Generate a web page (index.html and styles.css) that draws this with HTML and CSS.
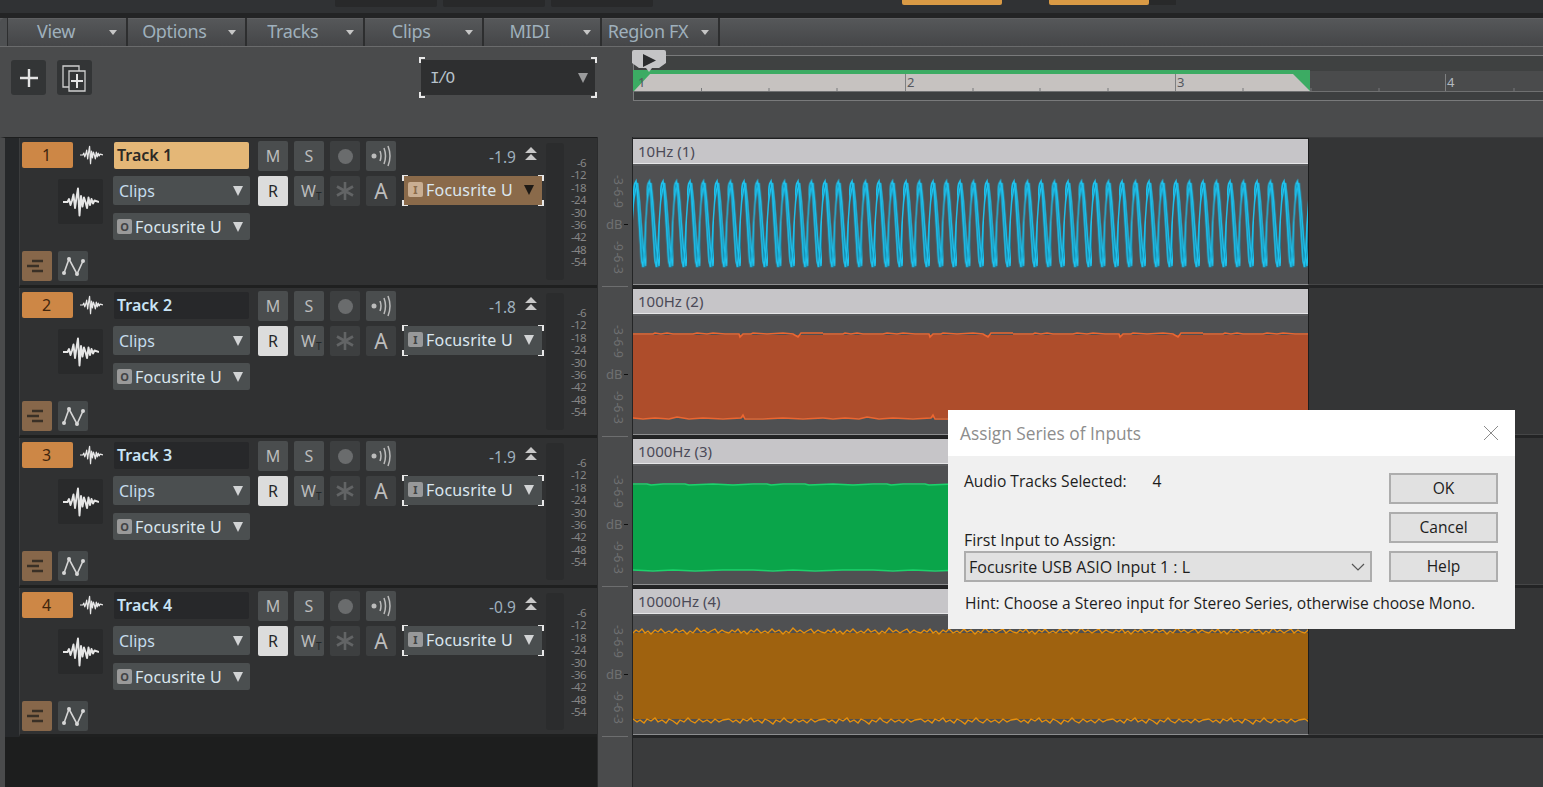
FILE: index.html
```html
<!DOCTYPE html>
<html lang="en">
<head>
<meta charset="utf-8">
<title>Assign Series of Inputs</title>
<link rel="stylesheet" href="styles.css">
</head>
<body>
<svg class="defs" aria-hidden="true">
  <symbol id="i-wave" viewBox="0 0 24 20"><path d="M0 10H3L4 8 5 12 6 9 7 5 8 14 9 7 10 1 11 19 12 6 13 13 14 7 15 10 16 14 17 7 18 12 19 8 20 11 21 9 24 10" fill="none" stroke="currentColor" stroke-width="1.3" stroke-linejoin="round"/></symbol>
  <symbol id="i-lanes" viewBox="0 0 30 30"><path d="M10 10H21M5 15H17M10 20H21" fill="none" stroke="currentColor" stroke-width="2.5"/></symbol>
  <symbol id="i-auto" viewBox="0 0 30 30"><path d="M6 22 11 8 19 23 25 10" fill="none" stroke="currentColor" stroke-width="1.6"/><g fill="currentColor"><circle cx="6" cy="22" r="2"/><circle cx="11" cy="8" r="2"/><circle cx="19" cy="23" r="2"/><circle cx="25" cy="10" r="2"/></g></symbol>
  <symbol id="i-echo" viewBox="0 0 30 30"><circle cx="8" cy="15" r="2.5" fill="currentColor"/><path d="M14 10Q16 15 14 20M18 7Q21 15 18 23M22 5Q26 15 22 25" fill="none" stroke="currentColor" stroke-width="1.5"/></symbol>
  <symbol id="i-star" viewBox="0 0 30 30"><path d="M15 6V24M7 10.500 23 19.500M23 10.500 7 19.500" fill="none" stroke="currentColor" stroke-width="2.6"/></symbol>
  <symbol id="i-updown" viewBox="0 0 14 14"><path d="M7 0 13 6H1ZM7 7 13 13H1Z" fill="currentColor"/></symbol>
</svg>

<header class="topbar">
  <span class="ttab ttab-first"></span><span class="ttab"></span><span class="ttab"></span>
  <span class="otab otab-first"></span><span class="otab otab-second"></span><span class="dtab"></span>
</header>

<nav class="menubar">
  <div class="menuitem"><span class="mlabel">View</span><i class="caret"></i></div>
  <div class="menuitem"><span class="mlabel">Options</span><i class="caret"></i></div>
  <div class="menuitem"><span class="mlabel">Tracks</span><i class="caret"></i></div>
  <div class="menuitem"><span class="mlabel">Clips</span><i class="caret"></i></div>
  <div class="menuitem"><span class="mlabel">MIDI</span><i class="caret"></i></div>
  <div class="menuitem"><span class="mlabel">Region FX</span><i class="caret"></i></div>
</nav>

<section class="toolbar">
  <div class="toolpane">
    <button class="tbtn"><svg width="22" height="22" viewBox="0 0 22 22"><path d="M11 2V20M2 11H20" stroke="#e4e4e4" stroke-width="2.4"/></svg></button>
    <button class="tbtn tbtn-dup"><svg width="30" height="32" viewBox="0 0 30 32"><path d="M9 25H3V4H19V9" fill="none" stroke="#cfcfcf" stroke-width="1.3"/><path d="M9 9H25V29H9Z" fill="none" stroke="#cfcfcf" stroke-width="1.3"/><path d="M17 12V26M11 19H23" stroke="#e4e4e4" stroke-width="2"/></svg></button>
    <div class="iosel brk"><span class="iotext">I/O</span><i class="tri tri-io"></i></div>
  </div>
  <div class="rulerpane">
    <svg class="ruler" width="911" height="52" viewBox="0 0 911 52">
      <rect x="1" y="5" width="910" height="16" fill="#3f4141"/>
      <rect x="1" y="42" width="910" height="8" fill="#3d3f40"/>
      <path d="M0 5.500H911M1 50.500H911M1.500 5V50" stroke="#797a7b" fill="none"/>
      <path d="M1 41 V20H678V41Z" fill="#3cab63"/>
      <path d="M2 41 18 24H661L678 41Z" fill="#c6c2c0"/>
      <path d="M1 41.500H911" stroke="#6f7071"/>
      <path d="M69.500 38V41M137 38V41M205 38V41M341 38V41M408 38V41M476 38V41M611 38V41M679 38V41M747 38V41M882 38V41" stroke="#77787a"/>
      <path d="M273.500 24V41M543.500 24V41M813.500 24V41" stroke="#7f8081"/>
      <text class="bar" x="6" y="37">1</text>
      <text class="bar" x="275" y="37">2</text>
      <text class="bar" x="545" y="37">3</text>
      <text class="bar bar-dim" x="815" y="37">4</text>
    </svg>
    <div class="playhead"><svg width="34" height="24" viewBox="0 0 34 24"><path d="M2 0H32Q34 0 34 2V13L27 18H20L17 22 14 18H7L0 13V2Q0 0 2 0Z" fill="#c4c4c6"/><path d="M11 4 24 10.500 11 17Z" fill="#2a2b2d"/></svg></div>
  </div>
</section>

<main class="workspace">
  <div class="tracklist">

    <article class="track">
      <div class="t-left">
        <div class="t-row1"><span class="num">1</span><svg class="ic-wave"><use href="#i-wave"/></svg><span class="name name-on">Track 1</span></div>
        <div class="t-mid">
          <div class="tile"><svg width="36" height="30"><use href="#i-wave"/></svg></div>
          <div class="t-sels">
            <div class="sel sel-clips"><span>Clips</span><i class="tri"></i></div>
            <div class="sel sel-out"><b class="badge">O</b><span class="clip-text">Focusrite U:</span><i class="tri"></i></div>
          </div>
        </div>
        <div class="t-bot"><span class="sq sq-brown"><svg width="30" height="30"><use href="#i-lanes"/></svg></span><span class="sq"><svg width="30" height="30"><use href="#i-auto"/></svg></span></div>
      </div>
      <div class="t-btns">
        <span class="btn">M</span><span class="btn">S</span><span class="btn btn-off"><i class="dot"></i></span><span class="btn"><svg width="30" height="30"><use href="#i-echo"/></svg></span>
        <span class="btn btn-r">R</span><span class="btn btn-w">W<small>T</small></span><span class="btn btn-off"><svg width="30" height="30"><use href="#i-star"/></svg></span><span class="btn btn-a">A</span>
      </div>
      <div class="t-right">
        <div class="gain"><span>-1.9</span><svg width="14" height="14"><use href="#i-updown"/></svg></div>
        <div class="insel insel-on brk"><b class="badge">I</b><span class="clip-text">Focusrite U:</span><i class="tri tri-dark"></i></div>
      </div>
      <div class="meter"></div>
      <div class="scale"><span>-6</span><span>-12</span><span>-18</span><span>-24</span><span>-30</span><span>-36</span><span>-42</span><span>-48</span><span>-54</span></div>
    </article>

    <article class="track">
      <div class="t-left">
        <div class="t-row1"><span class="num">2</span><svg class="ic-wave"><use href="#i-wave"/></svg><span class="name">Track 2</span></div>
        <div class="t-mid">
          <div class="tile"><svg width="36" height="30"><use href="#i-wave"/></svg></div>
          <div class="t-sels">
            <div class="sel sel-clips"><span>Clips</span><i class="tri"></i></div>
            <div class="sel sel-out"><b class="badge">O</b><span class="clip-text">Focusrite U:</span><i class="tri"></i></div>
          </div>
        </div>
        <div class="t-bot"><span class="sq sq-brown"><svg width="30" height="30"><use href="#i-lanes"/></svg></span><span class="sq"><svg width="30" height="30"><use href="#i-auto"/></svg></span></div>
      </div>
      <div class="t-btns">
        <span class="btn">M</span><span class="btn">S</span><span class="btn btn-off"><i class="dot"></i></span><span class="btn"><svg width="30" height="30"><use href="#i-echo"/></svg></span>
        <span class="btn btn-r">R</span><span class="btn btn-w">W<small>T</small></span><span class="btn btn-off"><svg width="30" height="30"><use href="#i-star"/></svg></span><span class="btn btn-a">A</span>
      </div>
      <div class="t-right">
        <div class="gain"><span>-1.8</span><svg width="14" height="14"><use href="#i-updown"/></svg></div>
        <div class="insel brk"><b class="badge">I</b><span class="clip-text">Focusrite U:</span><i class="tri"></i></div>
      </div>
      <div class="meter"></div>
      <div class="scale"><span>-6</span><span>-12</span><span>-18</span><span>-24</span><span>-30</span><span>-36</span><span>-42</span><span>-48</span><span>-54</span></div>
    </article>

    <article class="track">
      <div class="t-left">
        <div class="t-row1"><span class="num">3</span><svg class="ic-wave"><use href="#i-wave"/></svg><span class="name">Track 3</span></div>
        <div class="t-mid">
          <div class="tile"><svg width="36" height="30"><use href="#i-wave"/></svg></div>
          <div class="t-sels">
            <div class="sel sel-clips"><span>Clips</span><i class="tri"></i></div>
            <div class="sel sel-out"><b class="badge">O</b><span class="clip-text">Focusrite U:</span><i class="tri"></i></div>
          </div>
        </div>
        <div class="t-bot"><span class="sq sq-brown"><svg width="30" height="30"><use href="#i-lanes"/></svg></span><span class="sq"><svg width="30" height="30"><use href="#i-auto"/></svg></span></div>
      </div>
      <div class="t-btns">
        <span class="btn">M</span><span class="btn">S</span><span class="btn btn-off"><i class="dot"></i></span><span class="btn"><svg width="30" height="30"><use href="#i-echo"/></svg></span>
        <span class="btn btn-r">R</span><span class="btn btn-w">W<small>T</small></span><span class="btn btn-off"><svg width="30" height="30"><use href="#i-star"/></svg></span><span class="btn btn-a">A</span>
      </div>
      <div class="t-right">
        <div class="gain"><span>-1.9</span><svg width="14" height="14"><use href="#i-updown"/></svg></div>
        <div class="insel brk"><b class="badge">I</b><span class="clip-text">Focusrite U:</span><i class="tri"></i></div>
      </div>
      <div class="meter"></div>
      <div class="scale"><span>-6</span><span>-12</span><span>-18</span><span>-24</span><span>-30</span><span>-36</span><span>-42</span><span>-48</span><span>-54</span></div>
    </article>

    <article class="track">
      <div class="t-left">
        <div class="t-row1"><span class="num">4</span><svg class="ic-wave"><use href="#i-wave"/></svg><span class="name">Track 4</span></div>
        <div class="t-mid">
          <div class="tile"><svg width="36" height="30"><use href="#i-wave"/></svg></div>
          <div class="t-sels">
            <div class="sel sel-clips"><span>Clips</span><i class="tri"></i></div>
            <div class="sel sel-out"><b class="badge">O</b><span class="clip-text">Focusrite U:</span><i class="tri"></i></div>
          </div>
        </div>
        <div class="t-bot"><span class="sq sq-brown"><svg width="30" height="30"><use href="#i-lanes"/></svg></span><span class="sq"><svg width="30" height="30"><use href="#i-auto"/></svg></span></div>
      </div>
      <div class="t-btns">
        <span class="btn">M</span><span class="btn">S</span><span class="btn btn-off"><i class="dot"></i></span><span class="btn"><svg width="30" height="30"><use href="#i-echo"/></svg></span>
        <span class="btn btn-r">R</span><span class="btn btn-w">W<small>T</small></span><span class="btn btn-off"><svg width="30" height="30"><use href="#i-star"/></svg></span><span class="btn btn-a">A</span>
      </div>
      <div class="t-right">
        <div class="gain"><span>-0.9</span><svg width="14" height="14"><use href="#i-updown"/></svg></div>
        <div class="insel brk"><b class="badge">I</b><span class="clip-text">Focusrite U:</span><i class="tri"></i></div>
      </div>
      <div class="meter"></div>
      <div class="scale"><span>-6</span><span>-12</span><span>-18</span><span>-24</span><span>-30</span><span>-36</span><span>-42</span><span>-48</span><span>-54</span></div>
    </article>
  </div>

  <div class="dbcol">
    <div class="dbcell"><span class="vtext">-3 -6 -9</span><span class="dblabel">dB<i></i></span><span class="vtext">-9 -6 -3</span></div>
    <div class="dbcell"><span class="vtext">-3 -6 -9</span><span class="dblabel">dB<i></i></span><span class="vtext">-9 -6 -3</span></div>
    <div class="dbcell"><span class="vtext">-3 -6 -9</span><span class="dblabel">dB<i></i></span><span class="vtext">-9 -6 -3</span></div>
    <div class="dbcell"><span class="vtext">-3 -6 -9</span><span class="dblabel">dB<i></i></span><span class="vtext">-9 -6 -3</span></div>
  </div>

  <div class="cliparea">
    <div class="lane"><div class="clip">
      <div class="cliphead">10Hz (1)</div>
      <svg class="wave" width="675" height="118">
        <defs><pattern id="w1" patternUnits="userSpaceOnUse" width="13.500" height="118">
          <path d="M-3 60 0 34 1.500 22 3.500 17 5 30 6.500 50 8 72 9.500 94 11 101 12.500 88 13.500 62 16.500 34" fill="none" stroke="#177f9e" stroke-width="3.600"/>
          <path d="M-2 55 0 30 1.500 18 3 15 4.500 28 5.500 46 7 70 8.500 95 10 101 11.500 85 12.500 60 14.500 30" fill="none" stroke="#1fc3ee" stroke-width="1.500"/>
          <path d="M-3.500 80-1 60 .5 36 2.500 24 4.500 17 6.500 36 8 56 10 82 11.500 92 12.500 100 14.500 78" fill="none" stroke="#1fc3ee" stroke-width="1.300"/>
        </pattern></defs>
        <rect width="675" height="118" fill="url(#w1)"/>
      </svg>
    </div></div>
    <div class="lane"><div class="clip">
      <div class="cliphead">100Hz (2)</div>
      <svg class="wave" width="675" height="118">
        <defs><pattern id="w2" patternUnits="userSpaceOnUse" width="190" height="118">
          <rect y="19" width="190" height="83" fill="#ae4d2b"/>
          <path d="M0 18H20L22 17 28 18 34 17 40 18H60L64 17 74 18 80 17 92 18 106 18 107 21 110 18H118L120 17 134 18 150 17 160 18 165 21 168 17H190" fill="none" stroke="#ec6630" stroke-width="1.500"/>
          <path d="M0 102 10 103 22 102 36 103 44 101 56 103 70 102 90 103 108 102 110 99 112 103 130 103 150 102 170 103 190 102" fill="none" stroke="#ec6630" stroke-width="1.500"/>
        </pattern></defs>
        <rect width="675" height="118" fill="url(#w2)"/>
      </svg>
    </div></div>
    <div class="lane"><div class="clip">
      <div class="cliphead">1000Hz (3)</div>
      <svg class="wave" width="675" height="118">
        <defs><pattern id="w3" patternUnits="userSpaceOnUse" width="120" height="118">
          <rect y="19" width="120" height="85" fill="#0aa54a"/>
          <path d="M0 18H14L18 19 30 18 52 18 56 19 80 18 100 19 120 18" fill="none" stroke="#1bd36c" stroke-width="1.400"/>
          <path d="M0 104 20 105 40 104 62 105 90 104 120 104" fill="none" stroke="#1bd36c" stroke-width="1.400"/>
        </pattern></defs>
        <rect width="675" height="118" fill="url(#w3)"/>
      </svg>
    </div></div>
    <div class="lane"><div class="clip">
      <div class="cliphead">10000Hz (4)</div>
      <svg class="wave" width="675" height="118">
        <defs><pattern id="w4" patternUnits="userSpaceOnUse" width="96" height="118">
          <rect y="17" width="96" height="86" fill="#9f620f"/>
          <path d="M0 17 3 14 6 16 9 13 12 17 15 15 18 18 22 14 25 16 28 13 32 17 36 15 39 17 43 13 46 16 50 14 54 18 57 15 60 17 64 12 68 16 71 14 75 17 78 15 82 13 85 17 89 14 92 16 96 17" fill="none" stroke="#e8900b" stroke-width="1.300"/>
          <path d="M0 103 4 106 7 104 11 107 14 103 18 105 22 102 25 106 29 104 33 107 36 103 40 105 44 108 47 104 51 106 55 102 58 105 62 107 66 103 70 106 74 104 78 107 82 103 86 106 90 104 96 103" fill="none" stroke="#e8900b" stroke-width="1.300"/>
        </pattern></defs>
        <rect width="675" height="118" fill="url(#w4)"/>
      </svg>
    </div></div>
  </div>
</main>

<aside class="dialog">
  <div class="dlg-title"><span>Assign Series of Inputs</span>
    <svg width="16" height="16" viewBox="0 0 16 16"><path d="M1 1 15 15M15 1 1 15" stroke="#8b8b8b" stroke-width="1" fill="none"/></svg>
  </div>
  <div class="dlg-body">
    <div class="dlg-left">
      <div class="dlg-count"><span>Audio Tracks Selected:</span><span>4</span></div>
      <label class="dlg-label">First Input to Assign:</label>
      <div class="dlg-select"><span>Focusrite USB ASIO Input 1 : L</span><svg width="14" height="8" viewBox="0 0 14 8"><path d="M1 1 7 7 13 1" fill="none" stroke="#555" stroke-width="1.200"/></svg></div>
      <p class="dlg-hint">Hint: Choose a Stereo input for Stereo Series, otherwise choose Mono.</p>
    </div>
    <div class="dlg-btns">
      <span class="dbtn">OK</span><span class="dbtn">Cancel</span><span class="dbtn">Help</span>
    </div>
  </div>
</aside>
</body>
</html>
```
FILE: styles.css
```css
* { box-sizing: border-box; }
html, body { margin: 0; height: 100%; }
body {
  width: 1543px; height: 787px; overflow: hidden; position: relative;
  display: flex; flex-direction: column;
  background: #4a4b4c; color: #c8c8c8;
  font-family: "Noto Sans", "Open Sans", sans-serif;
}
.defs { display: block; width: 0; height: 0; flex: none; }

/* top strip */
.topbar { flex: none; height: 18px; display: flex; align-items: flex-start; background: #303234; border-bottom: 5px solid #232425; }
.ttab { width: 102px; height: 7px; margin-right: 6px; background: #28292a; border-radius: 0 0 2px 2px; }
.ttab-first { margin-left: 335px; }
.otab { width: 100px; height: 5px; background: #d99a45; border-radius: 0 0 2px 2px; }
.otab-first { margin-left: 243px; }
.otab-second { margin-left: 47px; }
.dtab { width: 27px; height: 5px; background: #28292a; }

/* menu */
.menubar { flex: none; height: 29px; padding-left: 9px; display: flex; background: linear-gradient(#56585a, #454648); border-bottom: 1px solid #6a6b6c; box-shadow: inset 0 1px 0 #5f6062; }
.menubar::before { content: ""; width: 7px; margin-left: -9px; margin-right: 2px; border-right: 1px solid #2d2e2f; border-top-left-radius: 5px; background: #4e5052; }
.menuitem { flex: none; width: 118.400px; display: flex; align-items: center; border-right: 2px solid #2d2e2f; padding: 0 9px 0 0; }
.mlabel { width: 92px; margin-top: -2px; text-align: center; font-size: 18px; letter-spacing: -.35px; color: #9fb0bc; white-space: nowrap; }
.caret { margin-left: auto; width: 0; height: 0; border: 4px solid transparent; border-top: 5px solid #c6c6c6; border-bottom: 0; }

/* toolbar + ruler */
.toolbar { flex: none; height: 90px; display: flex; background: #4a4b4c; position: relative; }
.toolpane { width: 632px; height: 100%; display: flex; align-items: flex-start; padding: 13px 0 0 11px; }
.tbtn { width: 35px; height: 35px; padding: 0; border: 0; border-radius: 3px; background: #333536; display: flex; align-items: center; justify-content: center; }
.tbtn-dup { margin-left: 11px; }
.brk {
  background-repeat: no-repeat;
  background-image:
    linear-gradient(#e8e8e8, #e8e8e8), linear-gradient(#e8e8e8, #e8e8e8),
    linear-gradient(#e8e8e8, #e8e8e8), linear-gradient(#e8e8e8, #e8e8e8),
    linear-gradient(#e8e8e8, #e8e8e8), linear-gradient(#e8e8e8, #e8e8e8),
    linear-gradient(#e8e8e8, #e8e8e8), linear-gradient(#e8e8e8, #e8e8e8);
  background-size: 6px 2px, 2px 6px, 6px 2px, 2px 6px, 6px 2px, 2px 6px, 6px 2px, 2px 6px;
  background-position: 0 0, 0 0, 100% 0, 100% 0, 0 100%, 0 100%, 100% 100%, 100% 100%;
}
.iosel { width: 178px; height: 41px; margin: -3px 0 0 327px; display: flex; align-items: center; padding: 0 9px 0 11px; position: relative; background-color: transparent; }
.iosel::before { content: ""; position: absolute; inset: 3px 2px; background: #2e2f30; z-index: 0; }
.iotext { position: relative; margin-top: 2px; font: 16px "Liberation Mono", monospace; letter-spacing: -1.800px; color: #b7c2cb; }
.iosel .tri { position: relative; margin-left: auto; }
.rulerpane { flex: 1; position: relative; }
.ruler { display: block; margin-top: 3px; }
.bar { font: 13px "Noto Sans", sans-serif; fill: #55585e; }
.bar-dim { fill: #b4bac0; }
.playhead { position: absolute; left: 0; top: 3px; line-height: 0; }

.tri { flex: none; width: 0; height: 0; border: 5.500px solid transparent; border-top: 10px solid #d2d4d5; border-bottom: 0; }
.tri-io { border-top-color: #9a9b9c; }
.tri-dark { border-top-color: #1e1a16; }

/* workspace */
.workspace { flex: 1; display: flex; min-height: 0; }
.tracklist { width: 597px; flex: none; background: #1d1e1e; border-left: 5px solid #4a4b4c; padding-left: 14px; border-top: 1px solid #1d1e1e; height: 650px; }
.track { height: 150px; display: flex; background: #303132; border-bottom: 3px solid #1f2020; border-left: 1px solid #3c3d3e; padding-left: 2px; position: relative; box-shadow: -14px 0 0 #26282a; }
.track:last-child { height: 149px; }
.t-left { width: 236px; flex: none; display: flex; flex-direction: column; }
.t-row1 { display: flex; align-items: flex-start; padding-top: 4px; }
.num { width: 51px; height: 26px; border-radius: 2px; background: #cd8746; color: #40250d; font-size: 16px; line-height: 26px; text-align: center; padding-right: 2px; }
.ic-wave { width: 23px; height: 20px; margin: 3px 0 0 7px; color: #e8e8e8; }
.name { width: 135px; height: 27px; margin-left: 11px; border-radius: 2px; background: #27282a; color: #c9e4f6; font-size: 16px; font-weight: 600; line-height: 26px; padding-left: 3px; }
.name-on { background: #e4b777; color: #2c2a25; }
.t-mid { display: flex; margin-top: 7px; padding-left: 36px; }
.tile { width: 45px; height: 45px; margin-top: 3px; background: #292a2b; color: #e6e6e6; display: flex; align-items: center; justify-content: center; border-radius: 2px; }
.t-sels { margin-left: 10px; display: flex; flex-direction: column; gap: 8px; }
.sel { width: 137px; background: #4b4f50; display: flex; align-items: center; border-radius: 2px; color: #c5dcec; }
.sel-clips { height: 29px; padding: 0 7px 0 6px; font-size: 16px; }
.sel-clips span { flex: 1; }
.sel-out { height: 27px; padding: 0 7px 0 4px; font-size: 16px; }
.badge { flex: none; width: 15px; height: 15px; border-radius: 2px; background: #9a9a9a; color: #414345; font-size: 11px; line-height: 15px; font-weight: 700; text-align: center; }
.clip-text { flex: none; width: 86px; margin: 0 auto 0 3px; letter-spacing: .2px; white-space: nowrap; overflow: hidden; color: #dbe7ef; }
.t-bot { margin-top: 11px; display: flex; gap: 6px; }
.sq { width: 30px; height: 30px; border-radius: 2px; background: #45494a; color: #d6d6d6; display: block; line-height: 0; }
.sq-brown { background: #87674a; color: #3a3026; }
.t-btns { flex: none; width: 138px; margin-top: 3px; display: grid; grid-template-columns: repeat(4, 30px); grid-auto-rows: 30px; gap: 5px 6px; align-content: start; }
.btn { position: relative; background: #4a4d4e; border-radius: 2px; color: #bcbcbc; font-size: 16px; display: flex; align-items: center; justify-content: center; }
.btn-off { background: #3d3f40; color: #626465; }
.btn-r { background: #dcdcdc; color: #27282a; }
.btn-a { background: #3d3f40; color: #bdbdbd; font-size: 21px; }
.btn-w { padding-right: 1px; }
.btn-w small { position: absolute; left: 22px; top: 13px; color: #23272a; font-size: 10px; }
.dot { width: 15px; height: 15px; border-radius: 50%; background: #6a6c6d; }
.t-right { width: 138px; flex: none; margin-left: 8px; display: flex; flex-direction: column; }
.gain { height: 37px; display: flex; align-items: flex-start; justify-content: flex-end; gap: 8px; padding: 7px 4px 0 0; color: #9fb0bd; font-size: 15.500px; line-height: 24px; }
.gain svg { margin-top: 2px; color: #c8c8c8; }
.insel { position: relative; width: 142px; height: 31px; margin-left: -2px; padding: 0 2px 2px; display: flex; align-items: center; font-size: 16px; background-color: transparent; }
.insel .badge { margin-left: 4px; background-color: #98999a; }
.insel .tri { margin: 0 8px 0 4px; }
.insel-on .badge { background: #c9ae92; color: #8a6a4a; }
.insel::before { content: ""; position: absolute; inset: 1px 2px; background: #4a4e4f; z-index: 0; }
.insel-on::before { background: #8a6a4a; }
.insel > * { position: relative; }
.meter { flex: none; width: 18px; height: 137px; margin: 5px 0 0 4px; background: #2b2c2d; border-radius: 3px; }
.scale { flex: none; width: 22px; padding-top: 19px; display: flex; flex-direction: column; align-items: flex-end; font-size: 11.500px; letter-spacing: -.6px; line-height: 12.400px; color: #868686; }

/* dB column */
.dbcol { width: 35px; flex: none; background: #4a4b4c; border-left: 1px solid #2b2c2d; padding-top: 1px; }
.dbcell { height: 150px; padding: 37px 0 0 5px; display: flex; flex-direction: column; align-items: flex-start; position: relative; color: #6f7071; border-bottom: 1px solid transparent; }
.dbcell::after { content: ""; position: absolute; left: 4px; right: 4px; bottom: 0; border-bottom: 1px solid #6d6e6f; }
.vtext { writing-mode: vertical-rl; font-size: 12px; letter-spacing: -.8px; height: 34px; line-height: 13px; margin-left: 9px; white-space: nowrap; }
.dblabel { font-size: 13px; line-height: 18px; margin: 6px 0 8px 3px; position: relative; }
.dblabel i { position: absolute; left: 18px; top: 9px; width: 4px; height: 1px; background: #111; }

/* clips */
.cliparea { flex: 1; background: #3a3b3c; border-left: 1px solid #242526; padding-top: 1px; min-width: 0; }
.lane { height: 150px; background: #343536; border-bottom: 3px solid #232425; box-shadow: inset 0 -1px 0 #454647; }
.clip { width: 676px; height: 147px; background: #4f5052; border-top: 1px solid #1f2021; border-right: 1px solid #1c1d1e; border-bottom: 1px solid #8d8e90; }
.cliphead { height: 27px; padding: 0 0 0 5px; background: #c6c5c8; border-bottom: 2px solid #58595b; box-shadow: inset 0 -1px 0 #e6e6e8; color: #4b4a57; font-size: 15px; line-height: 24px; }
.wave { display: block; }

/* dialog */
.dialog { position: absolute; left: 948px; top: 410px; width: 567px; height: 219px; background: #f0f0f0; display: flex; flex-direction: column; color: #1d1d1d; font-family: "Open Sans", "Noto Sans", sans-serif; font-size: 15.600px; }
.dlg-title { height: 46px; flex: none; background: #fff; display: flex; align-items: center; justify-content: space-between; padding: 0 16px 0 12px; color: #8d8d8d; font-size: 17.300px; }
.dlg-body { flex: 1; display: flex; padding: 17px 17px 0 16px; }
.dlg-left { width: 408px; flex: none; }
.dlg-count { display: flex; gap: 26px; line-height: 18px; margin-top: -1px; }
.dlg-label { display: block; margin-top: 40px; line-height: 20px; font-size: 16px; }
.dlg-select { height: 31px; margin-top: 1px; background: #e1e1e1; border: 2px solid #adadad; display: flex; align-items: center; justify-content: space-between; padding: 0 5px 0 3px; font-size: 16px; }
.dlg-hint { margin: 11px 0 0 1px; white-space: nowrap; line-height: 20px; }
.dlg-btns { margin-left: 17px; width: 109px; display: flex; flex-direction: column; gap: 8px; }
.dbtn { height: 31px; padding-bottom: 1px; background: #e1e1e1; border: 2px solid #adadad; display: flex; align-items: center; justify-content: center; }
```
